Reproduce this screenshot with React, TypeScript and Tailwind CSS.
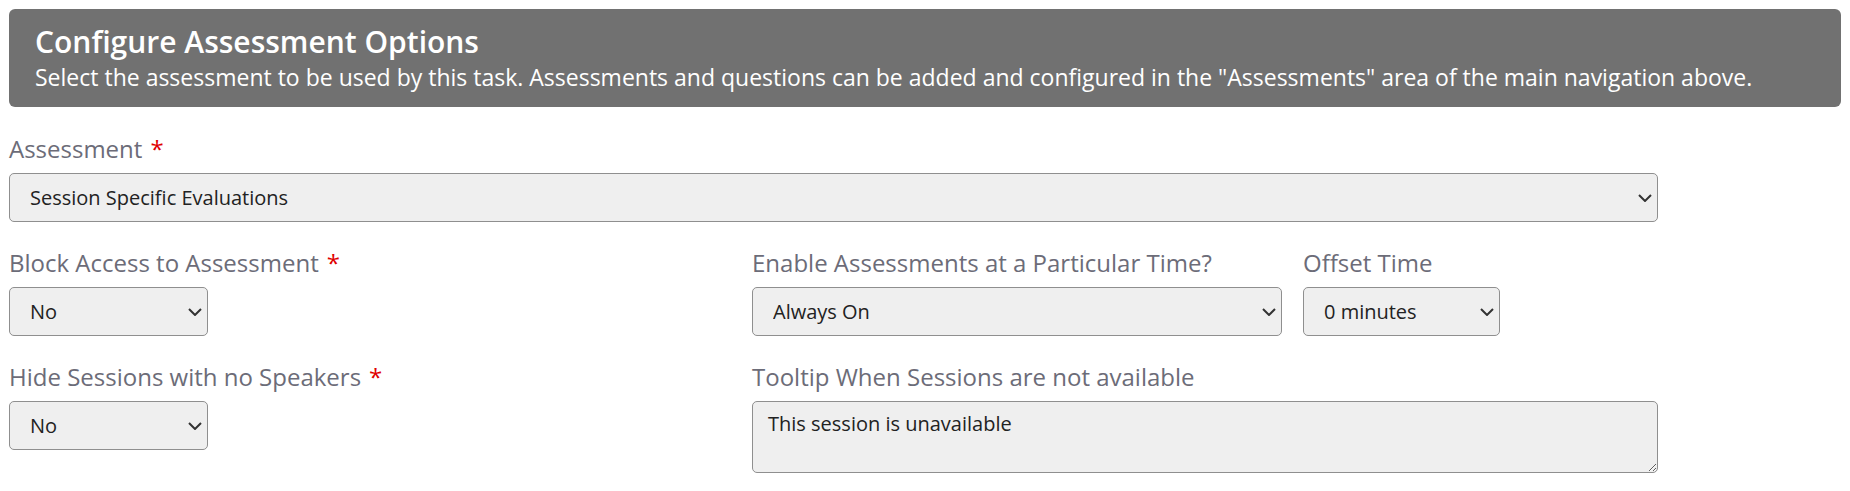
import React from 'react';

interface FieldProps {
  label: string;
  required?: boolean;
  children: React.ReactNode;
  className?: string;
}

const Field: React.FC<FieldProps> = ({ label, required, children, className = '' }) => (
  <div className={`flex flex-col gap-2 ${className}`}>
    <label className="text-[24px] leading-[32px] text-[#6c6c78]">
      {label}
      {required && <span className="ml-[8px] text-[#e00000]">*</span>}
    </label>
    {children}
  </div>
);

interface SelectBoxProps {
  value: string;
  options: string[];
  className?: string;
}

const SelectBox: React.FC<SelectBoxProps> = ({ value, options, className = '' }) => (
  <div className={`relative h-[49px] ${className}`}>
    <select
      defaultValue={value}
      className="h-full w-full appearance-none rounded-[5px] border border-[#8f8f8f] bg-[#efefef] pl-[20px] pr-[30px] text-[20px] text-[#222] outline-none"
    >
      {options.map((o) => (
        <option key={o}>{o}</option>
      ))}
    </select>
    <svg
      className="pointer-events-none absolute right-[6px] top-1/2 -translate-y-1/2"
      width="14"
      height="8"
      viewBox="0 0 14 8"
      fill="none"
    >
      <path d="M1 1l6 6 6-6" stroke="#333" strokeWidth="2" />
    </svg>
  </div>
);

export default function App() {
  return (
    <div className="min-h-screen bg-white p-[9px] font-['Open_Sans',sans-serif]">
      {/* Page heading */}
      <div className="rounded-[6px] bg-[#717171] px-[26px] pb-[15px] pt-[13px] text-white">
        <h1 className="text-[30px] font-semibold leading-[40px]">Configure Assessment Options</h1>
        <p className="text-[23px] leading-[30px]">
          Select the assessment to be used by this task. Assessments and questions can be added and
          configured in the "Assessments" area of the main navigation above.
        </p>
      </div>

      <div className="grid w-[1649px] grid-cols-[743px_906px] gap-y-[25px] pt-[26px]">
        <Field label="Assessment" required className="col-span-2">
          <SelectBox value="Session Specific Evaluations" options={['Session Specific Evaluations', 'General Evaluation']} />
        </Field>

        <Field label="Block Access to Assessment" required>
          <SelectBox value="No" options={['No', 'Yes']} className="w-[199px]" />
        </Field>

        <div className="flex gap-[21px]">
          <Field label="Enable Assessments at a Particular Time?">
            <SelectBox value="Always On" options={['Always On', 'At a Particular Time']} className="w-[530px]" />
          </Field>
          <Field label="Offset Time">
            <SelectBox value="0 minutes" options={['0 minutes', '5 minutes', '10 minutes', '15 minutes']} className="w-[197px]" />
          </Field>
        </div>

        <Field label="Hide Sessions with no Speakers" required>
          <SelectBox value="No" options={['No', 'Yes']} className="w-[199px]" />
        </Field>

        <Field label="Tooltip When Sessions are not available">
          <textarea
            defaultValue="This session is unavailable"
            className="h-[72px] w-full rounded-[5px] border border-[#8f8f8f] bg-[#efefef] px-[15px] pt-[8px] text-[20px] leading-[28px] text-[#222] outline-none"
          />
        </Field>
      </div>
    </div>
  );
}
